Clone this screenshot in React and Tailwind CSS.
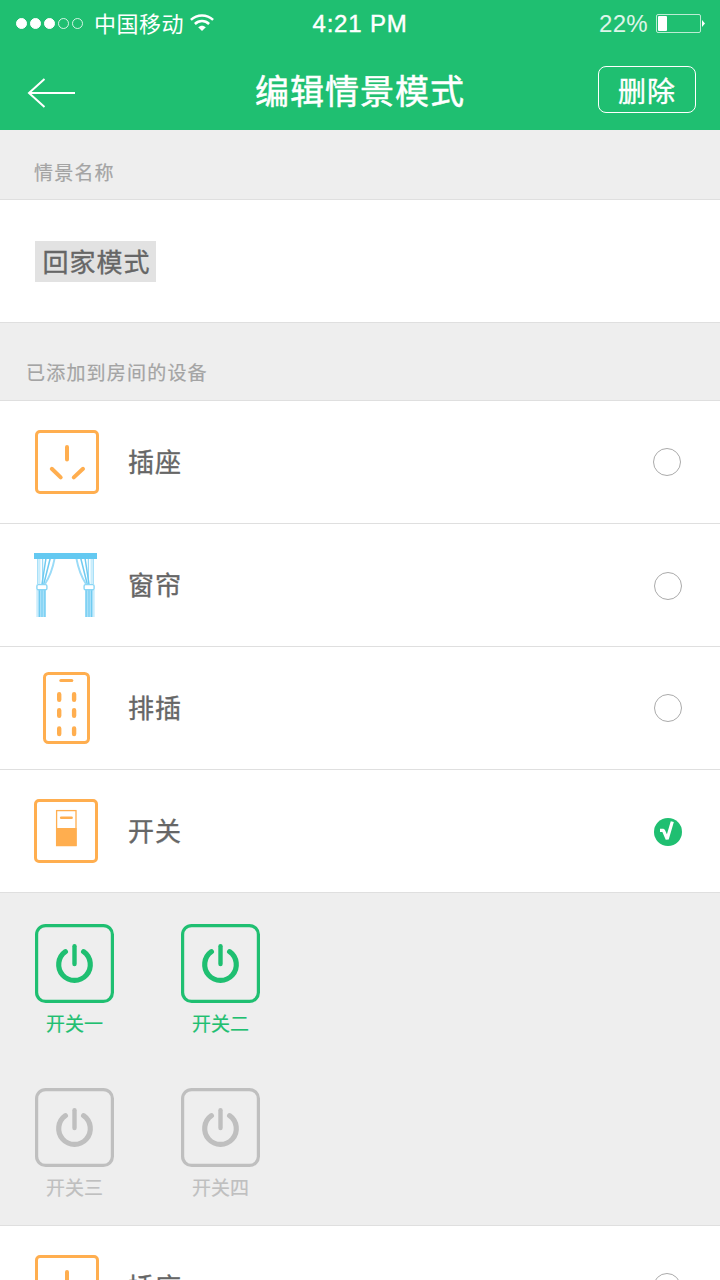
import React, { useState } from 'react';

const SocketIcon = () => (
    <svg width="64" height="64" viewBox="0 0 64 64" fill="none" stroke="#ffae4f" strokeLinecap="round">
        <rect x="1.5" y="1.5" width="61" height="61" rx="3.5" strokeWidth="3" />
        <path d="M32 17v12.5M16.8 38.8l8.9 8.6M48 38.8l-9.2 8.6" strokeWidth="4" />
    </svg>
);

const CurtainHalf = () => (
    <>
        <path d="M3.8 5v26M8.6 5v26" stroke="#9adbf7" strokeWidth="1.3" />
        <path d="M5.5 5v26" stroke="#c9ecfb" strokeWidth="2" />
        <path d="M12 5L8 31M16.3 5L9.8 31" stroke="#6fcbf1" strokeWidth="1.5" />
        <path d="M20.7 5c-1.5 8-4.5 18-9.7 26" stroke="#9adbf7" strokeWidth="1.9" />
        <path d="M2.8 37v27" stroke="#c9ecfb" strokeWidth="1" />
        <rect x="3.5" y="36" width="8.5" height="28" fill="#a8e0f8" />
        <path d="M5.5 37v27M8 37v27M10.8 37v27" stroke="#6fcbf1" strokeWidth="1" />
        <rect x="2.9" y="31.6" width="10" height="5.2" rx="1.4" fill="#fff" stroke="#8ad6f5" strokeWidth="1.4" />
    </>
);

const CurtainIcon = () => (
    <svg width="64" height="64" viewBox="0 0 64 64" fill="none">
        <CurtainHalf />
        <g transform="translate(63 0) scale(-1 1)">
            <CurtainHalf />
        </g>
        <rect width="63" height="6" fill="#64c9f1" />
    </svg>
);

const StripIcon = () => (
    <svg width="47" height="72" viewBox="0 0 47 72" fill="none" stroke="#ffae4f" strokeLinecap="round">
        <rect x="1.5" y="1.5" width="44" height="69" rx="4" strokeWidth="3" />
        <path d="M17.8 8.6h11" strokeWidth="3" />
        <path
            d="M16.2 22.2v5.6M31.1 22.2v5.6M16.2 38.2v5.6M31.1 38.2v5.6M16.2 56.5v5.6M31.1 56.5v5.6"
            strokeWidth="4.4"
        />
    </svg>
);

const SwitchIcon = () => (
    <svg width="64" height="64" viewBox="0 0 64 64" fill="none" stroke="#ffae4f">
        <rect x="1.5" y="1.5" width="61" height="61" rx="3.5" strokeWidth="3" />
        <rect x="22.6" y="11.6" width="19.4" height="35" strokeWidth="1.3" />
        <rect x="22" y="29" width="20.6" height="18" fill="#ffae4f" stroke="none" />
        <path d="M27.2 18.8h10.4" strokeWidth="2.6" strokeLinecap="round" />
    </svg>
);

const PowerIcon = () => (
    <svg width="79" height="79" viewBox="0 0 79 79" fill="none" stroke="currentColor" strokeLinecap="round">
        <rect x="1.6" y="1.6" width="75.8" height="75.8" rx="9" strokeWidth="3.2" />
        <path d="M39.5 22.2v17.8" strokeWidth="4.4" />
        <path d="M30.4 27.7a15.8 15.8 0 1 0 18.2 0" strokeWidth="5.2" />
    </svg>
);

const WifiIcon = () => (
    <svg width="24" height="18" viewBox="0 0 24 18" fill="none" stroke="#fff">
        <path d="M0.9 5.8C7.2 -0.1 16.8 -0.1 23.1 5.8" strokeWidth="2.5" />
        <path d="M4.9 10C9 6.1 15 6.1 19.1 10" strokeWidth="2.5" />
        <path d="M8.2 13.2C10.4 11.1 13.6 11.1 15.8 13.2L12 17z" fill="#fff" stroke="none" />
    </svg>
);

const BatteryIcon = () => (
    <svg width="49" height="19" viewBox="0 0 49 19" fill="none">
        <rect x="0.5" y="0.5" width="44" height="18" rx="1.5" stroke="#fff" strokeOpacity="0.7" />
        <rect x="2" y="2" width="9" height="15" rx="1" fill="#fff" />
        <path d="M46 6l3 3.5-3 3.5z" fill="#fff" />
    </svg>
);

const DEVICES = [
    { id: 1, name: '插座', icon: SocketIcon, slot: 'ml-[35px]', radio: 'mr-[39px]' },
    { id: 2, name: '窗帘', icon: CurtainIcon, slot: 'ml-[34px]', radio: 'mr-[38px] mt-0.5' },
    { id: 3, name: '排插', icon: StripIcon, slot: 'ml-[34px]', radio: 'mr-[38px]' },
    { id: 4, name: '开关', icon: SwitchIcon, slot: 'ml-[34px]', radio: 'mr-[38px] mt-0.5' },
];

const SWITCHES = [
    { id: 1, name: '开关一', on: true },
    { id: 2, name: '开关二', on: true },
    { id: 3, name: '开关三', on: false },
    { id: 4, name: '开关四', on: false },
];

const Radio = ({ checked }) =>
    checked ? (
        <svg width="28" height="28" viewBox="0 0 28 28" fill="none">
            <circle cx="14" cy="14" r="14" fill="#1fbf71" />
            <path d="M6 12.4h3.4l3.8 8.6L18.3 3.6" stroke="#fff" strokeWidth="3.2" strokeLinejoin="bevel" />
        </svg>
    ) : (
        <svg width="28" height="28" viewBox="0 0 28 28" fill="none">
            <circle cx="14" cy="14" r="13.5" stroke="#aaa" />
        </svg>
    );

const DeviceRow = ({ device, checked, onToggle }) => {
    const Icon = device.icon;
    return (
        <div
            onClick={onToggle}
            className="h-[123px] shrink-0 bg-white border-b border-[#dfdfdf] flex items-center cursor-pointer"
        >
            <div className="w-[128px] shrink-0 flex">
                <div className={`w-16 flex justify-center ${device.slot}`}>
                    <Icon />
                </div>
            </div>
            <span className="flex-1 pb-0.5 text-[26px] leading-none tracking-[1px] [-webkit-text-stroke:0.35px] text-[#666]">
                {device.name}
            </span>
            <div className={device.radio}>
                <Radio checked={checked} />
            </div>
        </div>
    );
};

const StatusBar = () => (
    <div className="h-[46px] grid grid-cols-3 items-center text-white">
        <div className="flex items-center pl-4">
            <div className="flex gap-[3px]">
                {[true, true, true, false, false].map((filled, i) => (
                    <span
                        key={i}
                        className={`size-[11px] rounded-full border ${filled ? 'bg-white border-white' : 'border-white/80'}`}
                    />
                ))}
            </div>
            <span className="ml-[11px] mr-1.5 pb-[3px] text-[22px] leading-none tracking-[0.5px]">中国移动</span>
            <WifiIcon />
        </div>
        <div className="pt-0.5 text-center text-[24px] leading-none tracking-[0.8px] [-webkit-text-stroke:0.4px] font-['Liberation_Sans']">
            4:21 PM
        </div>
        <div className="flex items-center justify-end pr-[15px] gap-2">
            <span className="pt-0.5 text-[24px] leading-none tracking-[0.3px] text-white/85 font-['Liberation_Sans']">22%</span>
            <BatteryIcon />
        </div>
    </div>
);

export default function App() {
    const [selected, setSelected] = useState([4]);

    const toggle = (id) => {
        setSelected((prev) => (prev.includes(id) ? prev.filter((s) => s !== id) : [...prev, id]));
    };

    return (
        <div className="w-[720px] h-[1280px] overflow-hidden flex flex-col bg-[#eee] font-['Noto_Sans_CJK_SC',sans-serif]">
            <header className="h-[130px] shrink-0 bg-[#1fbf71] text-white">
                <StatusBar />
                <div className="h-[84px] pt-[3px] grid grid-cols-[140px_1fr_140px] items-center">
                    <button className="ml-[27px] mt-[7px] w-12">
                        <svg width="48" height="30" viewBox="0 0 48 30" fill="none" stroke="#fff" strokeWidth="2">
                            <path d="M17.5 1L2 15 17.5 29M2 15H48" />
                        </svg>
                    </button>
                    <h1 className="text-center text-[34px] leading-none tracking-[1px] [-webkit-text-stroke:0.5px]">编辑情景模式</h1>
                    <button className="justify-self-end mr-6 w-[98px] h-[47px] pt-px border border-white rounded-lg text-[28px] leading-none tracking-[1px] [-webkit-text-stroke:0.4px]">
                        删除
                    </button>
                </div>
            </header>

            <div className="h-[70px] shrink-0 border-b border-[#dfdfdf] flex items-center pt-3.5 pl-[34px] text-[19px] leading-none tracking-[1.2px] [-webkit-text-stroke:0.2px] text-[#a4a4a4]">
                情景名称
            </div>
            <div className="h-[123px] shrink-0 bg-white border-b border-[#dfdfdf] flex items-center pl-[35px]">
                <span className="w-[121px] h-[41px] pl-0.5 bg-[#e2e2e2] flex items-center justify-center text-[26px] leading-none tracking-[1px] [-webkit-text-stroke:0.35px] text-[#666]">
                    回家模式
                </span>
            </div>

            <div className="h-[78px] shrink-0 border-b border-[#dfdfdf] flex items-center pt-5 pl-[26px] text-[19px] leading-none tracking-[1.2px] [-webkit-text-stroke:0.2px] text-[#a4a4a4]">
                已添加到房间的设备
            </div>
            {DEVICES.map((device) => (
                <DeviceRow
                    key={device.id}
                    device={device}
                    checked={selected.includes(device.id)}
                    onToggle={() => toggle(device.id)}
                />
            ))}

            <div className="h-[333px] shrink-0 border-b border-[#dfdfdf] pt-[31px] pl-[35px] grid grid-cols-[146px_146px] auto-rows-[164px] content-start">
                {SWITCHES.map((s) => (
                    <div
                        key={s.id}
                        className={`w-[79px] flex flex-col items-center gap-2.5 ${s.on ? 'text-[#1fbf71]' : 'text-[#bfbfbf]'}`}
                    >
                        <PowerIcon />
                        <span className="text-[19px] leading-none whitespace-nowrap [-webkit-text-stroke:0.2px]">{s.name}</span>
                    </div>
                ))}
            </div>

            <DeviceRow device={DEVICES[0]} checked={false} />
        </div>
    );
}
